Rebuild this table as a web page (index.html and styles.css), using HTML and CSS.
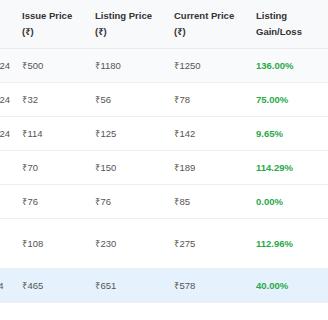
FILE: index.html
```html
<!DOCTYPE html>
<html lang="en">
<head>
<meta charset="utf-8">
<title>IPO Listing Performance</title>
<link rel="stylesheet" href="styles.css">
</head>
<body>
<div class="scroller">
  <table class="ipo">
    <colgroup>
      <col class="col-name">
      <col class="col-date">
      <col class="col-issue">
      <col class="col-listing">
      <col class="col-current">
      <col class="col-gain">
    </colgroup>
    <thead>
      <tr>
        <th>Company</th>
        <th>Date</th>
        <th>Issue Price (₹)</th>
        <th>Listing Price (₹)</th>
        <th>Current Price (₹)</th>
        <th>Listing Gain/Loss</th>
      </tr>
    </thead>
    <tbody>
      <tr class="hover">
        <td>Alpha Tech</td><td>Mar 15, 2024</td><td>₹500</td><td>₹1180</td><td>₹1250</td><td class="gain">136.00%</td>
      </tr>
      <tr>
        <td>Beta Foods</td><td>Mar 12, 2024</td><td>₹32</td><td>₹56</td><td>₹78</td><td class="gain">75.00%</td>
      </tr>
      <tr>
        <td>Gamma Ltd</td><td>Feb 28, 2024</td><td>₹114</td><td>₹125</td><td>₹142</td><td class="gain">9.65%</td>
      </tr>
      <tr>
        <td>Delta Ltd</td><td>Dec 2023</td><td>₹70</td><td>₹150</td><td>₹189</td><td class="gain">114.29%</td>
      </tr>
      <tr>
        <td>Epsilon</td><td>Nov 2023</td><td>₹76</td><td>₹76</td><td>₹85</td><td class="gain">0.00%</td>
      </tr>
      <tr>
        <td>Zeta Infra Projects Limited</td><td>Oct 2023</td><td>₹108</td><td>₹230</td><td>₹275</td><td class="gain">112.96%</td>
      </tr>
      <tr class="selected">
        <td>Eta Motors</td><td>Jan 2, 2024</td><td>₹465</td><td>₹651</td><td>₹578</td><td class="gain">40.00%</td>
      </tr>
    </tbody>
  </table>
</div>
</body>
</html>
```
FILE: styles.css
```css
html, body {
  margin: 0;
  padding: 0;
  background: #ffffff;
}

.scroller {
  width: 328px;
  overflow: hidden;
}

.ipo {
  margin-left: -152px;
  width: 480px;
  table-layout: fixed;
  border-collapse: collapse;
  font-family: "Liberation Sans", "Noto Sans", "DejaVu Sans", sans-serif;
  font-size: 9.5px;
  line-height: 16px;
  color: #555555;
}

.col-name { width: 100px; }
.col-date { width: 68px; }
.col-issue { width: 73px; }
.col-listing { width: 79px; }
.col-current { width: 82px; }
.col-gain { width: 78px; }

.ipo th {
  background: #f8f9fa;
  color: #333333;
  font-weight: bold;
  text-align: left;
  vertical-align: middle;
  padding: 8px 6px;
  border-bottom: 1px solid #e9ecef;
}

.ipo td {
  padding: 8.5px 6px;
  text-align: left;
  vertical-align: middle;
  border-bottom: 1px solid #eeeeee;
}

.ipo tr.hover td {
  background: #f9fafb;
}

.ipo tr.selected td {
  background: #e5f1fc;
}

.ipo td.gain {
  color: #2aa84a;
  font-weight: bold;
}
```
